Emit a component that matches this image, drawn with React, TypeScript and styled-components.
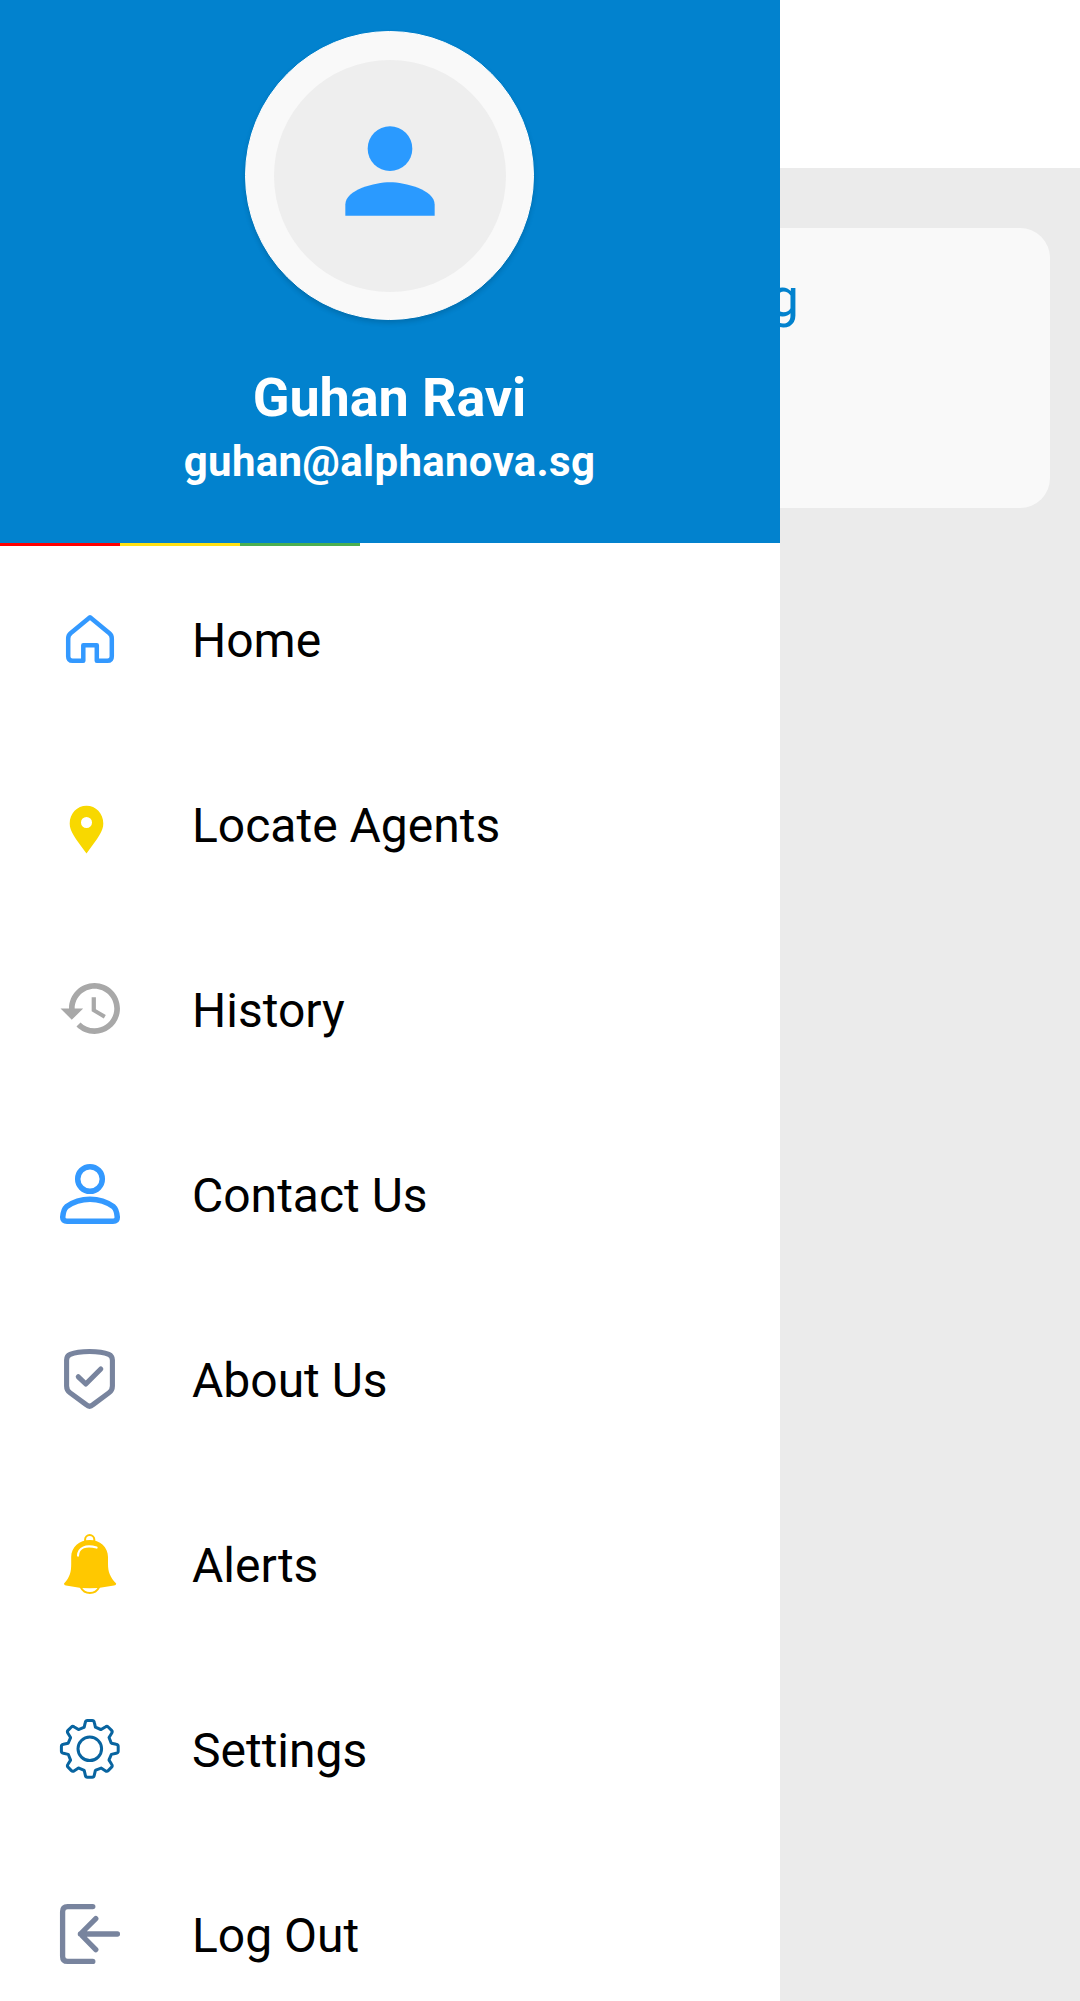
import React from "react";
import styled, { createGlobalStyle } from "styled-components";

const GlobalStyle = createGlobalStyle`
  *, *::before, *::after { box-sizing: border-box; }
  body { margin: 0; background: #ebebeb; font-family: Roboto, "Liberation Sans", sans-serif; }
`;

const Screen = styled.div`
  position: relative;
  width: 1080px;
  height: 2001px;
  overflow: hidden;
  background: #ebebeb;
`;

const AppBar = styled.header`
  height: 168px;
  background: #ffffff;
`;

const Content = styled.main`
  padding: 60px 30px;
`;

const Card = styled.section`
  display: flex;
  justify-content: flex-end;
  height: 280px;
  padding: 40px 251px 0 0;
  border-radius: 30px;
  background: #f9f9f9;
`;

const CardTitle = styled.div`
  font-size: 54px;
  line-height: 60px;
  color: #0282ce;
`;

const Drawer = styled.aside`
  position: absolute;
  top: 0;
  left: 0;
  display: flex;
  flex-direction: column;
  width: 780px;
  height: 2001px;
  background: #ffffff;
`;

const Profile = styled.div`
  display: flex;
  flex-direction: column;
  align-items: center;
  flex: none;
  height: 543px;
  padding: 31px 1px 0 0;
  background: #0282ce;
  color: #ffffff;
`;

const AvatarRing = styled.div`
  display: flex;
  align-items: center;
  justify-content: center;
  width: 289px;
  height: 289px;
  border: 1px solid #ffffff;
  border-radius: 50%;
  background: #f9f9f9;
  box-shadow: 0 3px 5px rgba(0, 0, 0, 0.15);
`;

const Avatar = styled.div`
  display: flex;
  align-items: center;
  justify-content: center;
  width: 232px;
  height: 232px;
  padding-bottom: 10px;
  border-radius: 50%;
  background: #eeeeee;
`;

const Name = styled.div`
  margin-top: 46px;
  font-size: 54px;
  font-weight: 700;
  line-height: 64px;
  letter-spacing: -0.1px;
`;

const Email = styled.div`
  margin-top: 7px;
  font-size: 42px;
  font-weight: 700;
  line-height: 50px;
  letter-spacing: 0.3px;
`;

const Stripes = styled.div`
  display: flex;
  flex: none;
  height: 3px;
`;

const Stripe = styled.span<{ $color: string }>`
  width: 120px;
  background: ${(p) => p.$color};
`;

const Menu = styled.nav`
  display: flex;
  flex-direction: column;
`;

const MenuItem = styled.a`
  display: flex;
  align-items: center;
  flex: none;
  gap: 72px;
  height: 185px;
  padding-left: 60px;
  color: #000000;
`;

const Label = styled.span`
  padding-top: 5px;
  font-size: 48px;
  line-height: 56px;
`;

const Glyph = styled.svg`
  display: block;
  flex: none;
  width: 60px;
  height: 60px;
  overflow: visible;
  fill: none;
  stroke-linecap: round;
  stroke-linejoin: round;
`;

const icon = (children: React.ReactNode) => <Glyph viewBox="0 0 60 60">{children}</Glyph>;

// One tooth plus the valley after it, repeated every 45 degrees.
const gearPath = (() => {
  const at = (x: number, y: number, turn: number) => {
    const a = (turn * Math.PI) / 4;
    const px = 29.8 + x * Math.cos(a) - y * Math.sin(a);
    const py = 29.8 + x * Math.sin(a) + y * Math.cos(a);
    return `${px.toFixed(2)} ${py.toFixed(2)}`;
  };
  let d = "";
  for (let i = 0; i < 8; i++) {
    d += `${i ? "L" : "M"}${at(-5.6, -21.6, i)} L${at(-4.5, -26.4, i)} Q${at(-4.1, -28.4, i)} ${at(-2.4, -28.4, i)}`;
    d += ` L${at(2.4, -28.4, i)} Q${at(4.1, -28.4, i)} ${at(4.5, -26.4, i)} L${at(5.6, -21.6, i)}`;
    d += ` L${at(10.9, -19.3, i)} `;
  }
  return d + "Z";
})();

const items = [
  {
    label: "Home",
    glyph: icon(
      <path
        stroke="#3399ff"
        strokeWidth="4.5"
        d="M30 8.3 49.4 24.3Q51.8 26.4 51.8 29.5V47.5Q51.8 51.8 47.5 51.8H36.8V36.3H23.3V51.8H12.5Q8.2 51.8 8.2 47.5V29.5Q8.2 26.4 10.6 24.3Z"
      />
    ),
  },
  {
    label: "Locate Agents",
    glyph: icon(
      <path
        fill="#f8d800"
        fillRule="evenodd"
        transform="translate(-2.3 6.9) scale(2.4)"
        d="M12 2C8.13 2 5 5.13 5 9.4c0 3.3 2.2 6 7 12.5 4.8-6.5 7-9.2 7-12.5C19 5.13 15.87 2 12 2zm0 9.3a2.3 2.3 0 1 1 0-4.6 2.3 2.3 0 0 1 0 4.6z"
      />
    ),
  },
  {
    label: "History",
    glyph: icon(
      <path
        fill="#a8a8a8"
        transform="translate(-2.3 -4.5) scale(2.83)"
        d="M13 3c-4.97 0-9 4.03-9 9H1l3.89 3.89.07.14L9 12H6c0-3.87 3.13-7 7-7s7 3.13 7 7-3.13 7-7 7c-1.93 0-3.68-.79-4.94-2.06l-1.42 1.42C8.27 19.99 10.51 21 13 21c4.97 0 9-4.03 9-9s-4.03-9-9-9zm-1 5v5l4.28 2.54.72-1.21-3.5-2.08V8H12z"
      />
    ),
  },
  {
    label: "Contact Us",
    glyph: icon(
      <g stroke="#3399ff" strokeWidth="5.5">
        <circle cx="30" cy="15" r="12.3" />
        <path d="M30 35.3C40 35.3 49 39.5 53.6 42.8Q56.6 45.2 57.3 53.3Q57.3 57.3 53 57.3H7Q2.7 57.3 2.7 53.3Q3.4 45.2 6.4 42.8C11 39.5 20 35.3 30 35.3Z" />
      </g>
    ),
  },
  {
    label: "About Us",
    glyph: icon(
      <g stroke="#78849e" strokeWidth="5.1">
        <path d="M29.6 2.5C38 2.5 45 3.8 48.8 5.4Q52.4 7 52.4 11V37Q52.4 41.3 49 43.8L33 55.6Q29.6 58.8 26.2 55.6L10 43.8Q6.6 41.3 6.6 37V11Q6.6 7 10.2 5.4C14 3.8 21 2.5 29.6 2.5Z" />
        <path d="M18.3 27.8 25.8 35 40.8 20" />
      </g>
    ),
  },
  {
    label: "Alerts",
    glyph: icon(
      <>
        <path
          fill="#ffc800"
          d="M29.7 6C40 6 48 13 48 23V30C48 38 50 43 56.2 49.6Q56.2 51.4 54 51.6Q41 54.3 29.7 54.3T6 51.6Q4 51.4 4 49.6C10 43 11.2 38 11.2 30V23C11.2 13 19.5 6 29.7 6Z"
        />
        <path stroke="#ffc800" strokeWidth="2" d="M25.1 7V5.6a4.6 4.6 0 0 1 9.2 0V7" />
        <path stroke="#ffffff" strokeWidth="2.1" d="M18 21.6C18.4 13.6 26 10.4 36.6 13.6" />
        <path stroke="#ffc800" strokeWidth="2" d="M20.8 53.4C24.5 61 35.3 61 39 53.4" />
      </>
    ),
  },
  {
    label: "Settings",
    glyph: icon(
      <g stroke="#0864a0" strokeWidth="3">
        <path d={gearPath} />
        <circle cx="29.8" cy="29.8" r="11.8" />
      </g>
    ),
  },
  {
    label: "Log Out",
    glyph: icon(
      <g stroke="#78849e" strokeWidth="5.3">
        <path d="M32.8 2.6H7.6Q2.6 2.6 2.6 7.6V52.4Q2.6 57.4 7.6 57.4H32.8" />
        <path d="M57.4 30H20.4M35.8 14.6 20.4 30 35.8 45.6" />
      </g>
    ),
  },
];

export default function App() {
  return (
    <>
      <GlobalStyle />
      <Screen>
        <AppBar />
        <Content>
          <Card>
            <CardTitle>g</CardTitle>
          </Card>
        </Content>
        <Drawer>
          <Profile>
            <AvatarRing>
              <Avatar>
                <svg width="134" height="134" viewBox="0 0 24 24" fill="#2a9aff">
                  <circle cx="12" cy="8" r="4" />
                  <path d="M12 14c-2.67 0-8 1.34-8 4v2h16v-2c0-2.66-5.33-4-8-4z" />
                </svg>
              </Avatar>
            </AvatarRing>
            <Name>Guhan Ravi</Name>
            <Email>guhan@alphanova.sg</Email>
          </Profile>
          <Stripes>
            <Stripe $color="#ff0000" />
            <Stripe $color="#ffe012" />
            <Stripe $color="#4caf50" />
          </Stripes>
          <Menu>
            {items.map((item) => (
              <MenuItem key={item.label}>
                {item.glyph}
                <Label>{item.label}</Label>
              </MenuItem>
            ))}
          </Menu>
        </Drawer>
      </Screen>
    </>
  );
}
